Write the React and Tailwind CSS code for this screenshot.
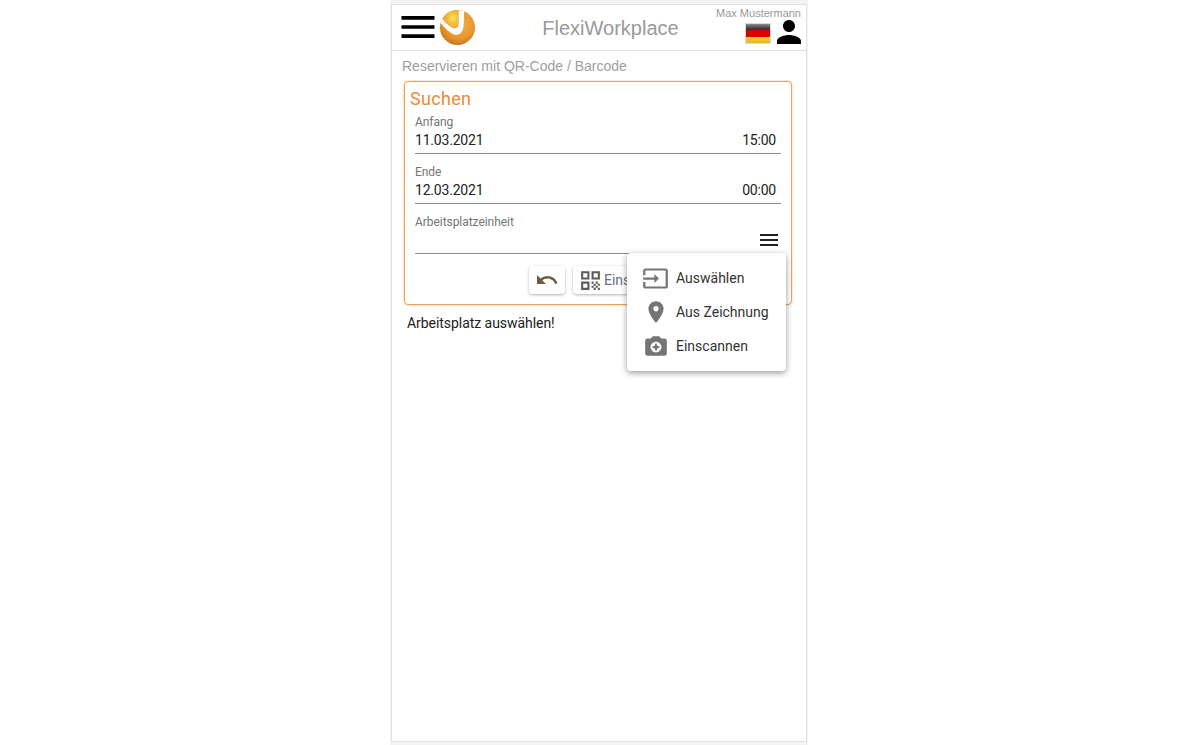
const Icon = ({ d, className }) => (
  <svg viewBox="0 0 24 24" className={className} fill="currentColor"><path d={d} /></svg>
);
const MENU = "M3 18h18v-2H3v2zm0-5h18v-2H3v2zm0-7v2h18V6H3z";
const INPUT = "M21 3.01H3c-1.1 0-2 .9-2 2V9h2V4.99h18v14.03H3V15H1v4.01c0 1.1.9 1.98 2 1.98h18c1.1 0 2-.88 2-1.98v-14c0-1.11-.9-2-2-2zM11 16l4-4-4-4v3H1v2h10v3z";
const PLACE = "M12 2C8.13 2 5 5.13 5 9c0 5.25 7 13 7 13s7-7.75 7-13c0-3.87-3.13-7-7-7zm0 9.5c-1.38 0-2.5-1.12-2.5-2.5s1.12-2.5 2.5-2.5 2.5 1.12 2.5 2.5-1.12 2.5-2.5 2.5z";
const CAMERA = "M9 3L7.17 5H4c-1.1 0-2 .9-2 2v12c0 1.1.9 2 2 2h16c1.1 0 2-.9 2-2V7c0-1.1-.9-2-2-2h-3.17L15 3H9zm3 15c-2.76 0-5-2.24-5-5s2.24-5 5-5 5 2.24 5 5-2.24 5-5 5zm0-1l1.25-2.75L16 13l-2.75-1.25L12 9l-1.25 2.75L8 13l2.75 1.25z";
const UNDO = "M12.5 8c-2.65 0-5.05.99-6.9 2.6L2 7v9h9l-3.62-3.62c1.39-1.16 3.16-1.88 5.12-1.88 3.54 0 6.55 2.31 7.6 5.5l2.37-.78C21.08 11.03 17.15 8 12.5 8z";
const QR = "M3 11h8V3H3v8zm2-6h4v4H5V5zM3 21h8v-8H3v8zm2-6h4v4H5v-4zM13 3v8h8V3h-8zm6 6h-4V5h4v4zM19 19h2v2h-2zM13 13h2v2h-2zM15 15h2v2h-2zM13 17h2v2h-2zM15 19h2v2h-2zM17 17h2v2h-2zM17 13h2v2h-2zM19 15h2v2h-2z";
const PERSON = "M12 12c2.21 0 4-1.79 4-4s-1.79-4-4-4-4 1.79-4 4 1.79 4 4 4zm0 2c-2.67 0-8 1.34-8 4v2h16v-2c0-2.66-5.33-4-8-4z";

const Logo = () => (
  <svg viewBox="0 0 35 35" className="w-[35px] h-[35px] shrink-0">
    <defs>
      <radialGradient id="lg" cx="0.55" cy="0.4" r="0.7">
        <stop offset="0" stopColor="#f7b24a" />
        <stop offset="0.6" stopColor="#e8962c" />
        <stop offset="1" stopColor="#b86a14" />
      </radialGradient>
      <radialGradient id="ly" cx="0.65" cy="0.45" r="0.6">
        <stop offset="0" stopColor="#fbe15a" />
        <stop offset="1" stopColor="#eea02c" />
      </radialGradient>
    </defs>
    <circle cx="17.5" cy="17.5" r="17.5" fill="url(#lg)" />
    <path d="M0.6 13 Q8 22 14 24.5 Q22 26 23.5 17 L24.2 1.3 L18.5 0 L18.5 14 Q18 19 13 18 Q7 15 2.5 8.5 Z" fill="#fff" />
    <path d="M2.5 8.5 A17.5 17.5 0 0 1 18.5 0 L18.5 14 Q18 19 13 18 Q7 15 2.5 8.5 Z" fill="url(#ly)" />
  </svg>
);

const Flag = () => (
  <div className="w-[26px] h-[21px] flex flex-col rounded-[1px] overflow-hidden border border-[#d8d8d8]">
    <div className="flex-1 bg-gradient-to-b from-[#8a8a8a] to-[#2a2a2a]" />
    <div className="flex-1 bg-[#dd0000]" />
    <div className="flex-1 bg-gradient-to-b from-[#f5d020] to-[#e0b83a]" />
  </div>
);

const Field = ({ label, left, right }) => (
  <div className="h-[50px] mx-[10px] border-b border-[#8c8c8c] flex flex-col pt-[10px] box-border">
    <div className="text-[12px] leading-[16px] text-[#757575] font-['Roboto',sans-serif] tracking-[-0.05px]">{label}</div>
    <div className="flex justify-between items-center text-[14px] leading-[20px] text-[#212121] pr-[5px] font-['Roboto',sans-serif] tracking-[-0.2px]">
      <span>{left}</span>
      <span>{right}</span>
    </div>
  </div>
);

const MenuItem = ({ d, label, iconClass }) => (
  <div className="h-[34px] flex items-center pl-[16px]">
    <div className="w-[25px] h-[34px] flex items-center justify-center shrink-0">
      <Icon d={d} className={iconClass} />
    </div>
    <span className="ml-[8px] text-[14px] text-[#333333] font-['Roboto',sans-serif]">{label}</span>
  </div>
);

export default function App() {
  return (
    <div className="h-[745px] bg-white flex justify-center pr-[2px] font-['Liberation_Sans',sans-serif] overflow-hidden">
      <div className="w-[418px] h-[745px] bg-[#f3f3f3] pt-[4px] pb-[3px] px-px box-border">
        <div className="relative h-full bg-white border border-[#e2e2e2] box-border">
          <header className="h-[46px] border-b border-[#e0e0e0] flex items-start box-border">
            <Icon d={MENU} className="w-[44px] h-[44px] ml-[4px] text-black shrink-0" />
            <div className="mt-[5px]"><Logo /></div>
            <div className="flex-1 text-center text-[20px] leading-[24px] text-[#999999] mt-[11px] pl-[30px]">FlexiWorkplace</div>
            <div className="w-[90px] pr-[5px] flex flex-col items-end">
              <div className="text-[11px] leading-[12px] text-[#999999] mt-[2px] whitespace-nowrap">Max Mustermann</div>
              <div className="flex items-center -mr-[6px] mt-[4px]">
                <Flag />
                <Icon d={PERSON} className="w-[36px] h-[36px] -mt-[10px] -mb-[7px] text-black" />
              </div>
            </div>
          </header>

          <div className="text-[14px] leading-[16px] text-[#9e9e9e] pl-[10px] pt-[7px]">Reservieren mit QR-Code / Barcode</div>

          <div className="ml-[12px] mr-[14px] mt-[7px] h-[224px] border border-[#f0a050] rounded-[4px] shadow-[0_0_2px_#f5b070] box-border relative">
            <div className="text-[18px] leading-[22px] text-[#ee8a36] pl-[5px] pt-[6px] -mb-[6px] font-['Roboto',sans-serif] tracking-[0.3px]">Suchen</div>
            <div>
              <Field label="Anfang" left="11.03.2021" right="15:00" />
              <Field label="Ende" left="12.03.2021" right="00:00" />
              <div className="h-[50px] mx-[10px] border-b border-[#8c8c8c] flex flex-col pt-[10px] box-border">
                <div className="text-[12px] leading-[16px] text-[#757575] font-['Roboto',sans-serif] tracking-[-0.05px]">Arbeitsplatzeinheit</div>
                <div className="flex justify-end"><Icon d={MENU} className="w-[24px] h-[24px] -mt-[2px] text-[#212121]" /></div>
              </div>
            </div>
            <div className="flex justify-center gap-[8px] mt-[12px] pr-[6px] pl-[124px]">
              <button className="w-[36px] h-[28px] bg-white rounded-[4px] shadow-[0_1px_3px_rgba(0,0,0,0.3)] flex items-center justify-center shrink-0">
                <Icon d={UNDO} className="w-[24px] h-[24px] text-[#6b5f3f]" />
              </button>
              <button className="flex-1 h-[28px] bg-white rounded-[4px] shadow-[0_1px_3px_rgba(0,0,0,0.3)] flex items-center pl-[5px] text-[14px] text-[#5f7184] font-['Roboto',sans-serif]">
                <Icon d={QR} className="w-[25px] h-[25px] text-[#5c5c5c] mr-[1px]" />
                Einscannen
              </button>
            </div>
          </div>

          <div className="text-[14px] leading-[16px] text-[#212121] pl-[15px] pt-[10px] font-['Roboto',sans-serif] tracking-[-0.05px]">Arbeitsplatz auswählen!</div>

          <div className="absolute left-[235px] top-[248px] w-[159px] h-[118px] bg-white rounded-[4px] shadow-[0_2px_6px_rgba(0,0,0,0.4)] py-[8px] box-border">
            <MenuItem d={INPUT} label="Auswählen" iconClass="w-[27px] h-[27px] text-[#757575] shrink-0" />
            <MenuItem d={PLACE} label="Aus Zeichnung" iconClass="w-[26px] h-[26px] text-[#757575] shrink-0" />
            <MenuItem d={CAMERA} label="Einscannen" iconClass="w-[26px] h-[26px] text-[#757575] shrink-0" />
          </div>
        </div>
      </div>
    </div>
  );
}
